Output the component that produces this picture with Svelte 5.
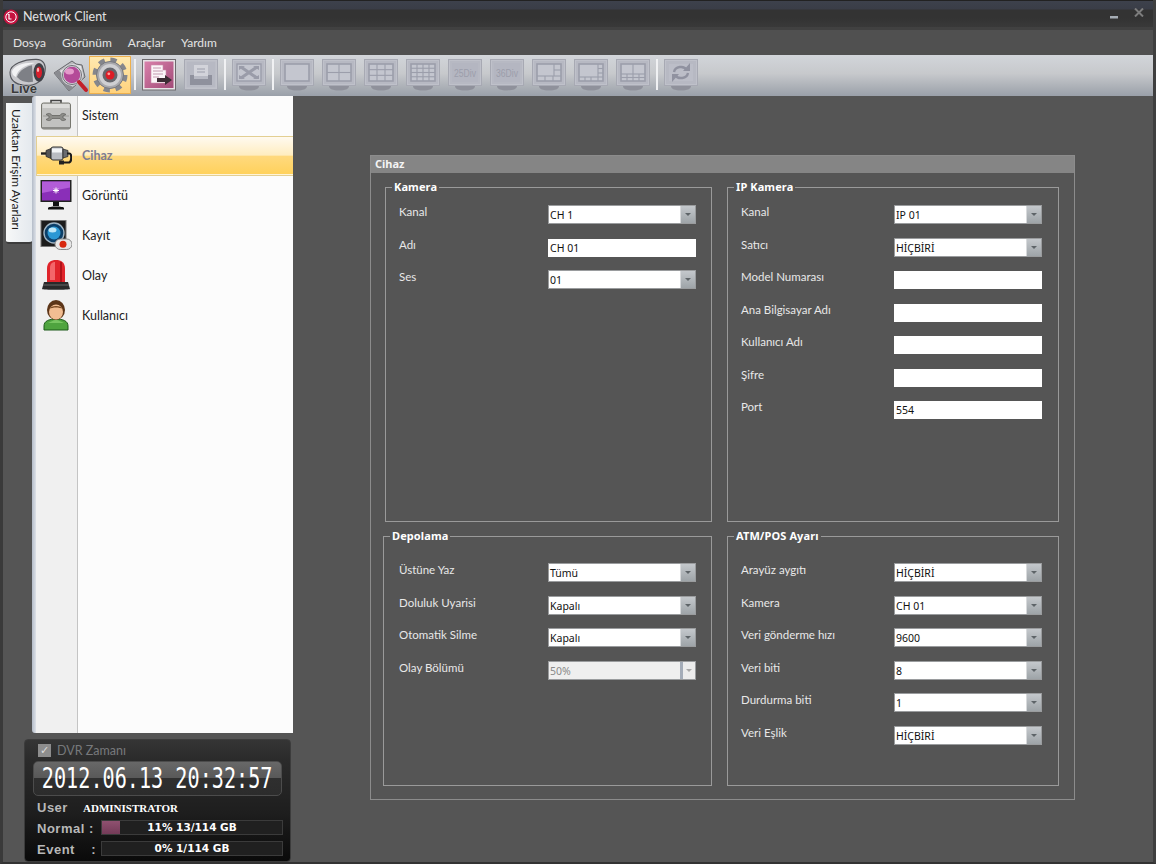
<script>
  const menus = ['Dosya', 'Görünüm', 'Araçlar', 'Yardım'];
  const X0 = 5, X1 = 29, Y0 = 5, Y1 = 22;
  const W = X1 - X0, H = Y1 - Y0;
  function grid(nx, ny) {
    const out = [];
    for (let i = 1; i < nx; i++) out.push([X0 + (W * i) / nx, Y0, X0 + (W * i) / nx, Y1]);
    for (let j = 1; j < ny; j++) out.push([X0, Y0 + (H * j) / ny, X1, Y0 + (H * j) / ny]);
    return out;
  }
  const monitors = [
    { lines: [] },
    { lines: grid(2, 2) },
    { lines: grid(3, 3) },
    { lines: grid(4, 4) },
    { text: '25Div', lines: [] },
    { text: '36Div', lines: [] },
    { lines: [[22, 5, 22, 17], [5, 17, 29, 17], [22, 11, 29, 11], [13, 17, 13, 22], [21, 17, 21, 22]] },
    { lines: [[24, 5, 24, 22], [5, 18, 29, 18], [24, 9.5, 29, 9.5], [24, 14, 29, 14], [11, 18, 11, 22], [17, 18, 17, 22]] },
    { lines: [[17, 5, 17, 15], [5, 15, 29, 15], [5, 18.5, 29, 18.5], [11, 15, 11, 22], [17, 15, 17, 22], [23, 15, 23, 22]] }
  ];
  const nav = [
    { id: 'tool', label: 'Sistem' },
    { id: 'plug', label: 'Cihaz', active: true },
    { id: 'screen', label: 'Görüntü' },
    { id: 'cam', label: 'Kayıt' },
    { id: 'siren', label: 'Olay' },
    { id: 'user', label: 'Kullanıcı' }
  ];
  const kamera = [
    { label: 'Kanal', type: 's', value: 'CH 1' },
    { label: 'Adı', type: 'i', value: 'CH 01' },
    { label: 'Ses', type: 's', value: '01' }
  ];
  const ip = [
    { label: 'Kanal', type: 's', value: 'IP 01' },
    { label: 'Satıcı', type: 's', value: 'HİÇBİRİ' },
    { label: 'Model Numarası', type: 'i', value: '' },
    { label: 'Ana Bilgisayar Adı', type: 'i', value: '' },
    { label: 'Kullanıcı Adı', type: 'i', value: '' },
    { label: 'Şifre', type: 'i', value: '' },
    { label: 'Port', type: 'i', value: '554' }
  ];
  const depo = [
    { label: 'Üstüne Yaz', type: 's', value: 'Tümü' },
    { label: 'Doluluk Uyarisi', type: 's', value: 'Kapalı' },
    { label: 'Otomatik Silme', type: 's', value: 'Kapalı' },
    { label: 'Olay Bölümü', type: 's', value: '50%', disabled: true }
  ];
  const atm = [
    { label: 'Arayüz aygıtı', type: 's', value: 'HİÇBİRİ' },
    { label: 'Kamera', type: 's', value: 'CH 01' },
    { label: 'Veri gönderme hızı', type: 's', value: '9600' },
    { label: 'Veri biti', type: 's', value: '8' },
    { label: 'Durdurma biti', type: 's', value: '1' },
    { label: 'Veri Eşlik', type: 's', value: 'HİÇBİRİ' }
  ];
  const groups = [
    { title: 'Kamera', rows: kamera, cls: 'g-left' },
    { title: 'IP Kamera', rows: ip, cls: 'g-right' },
    { title: 'Depolama', rows: depo, cls: 'g-left g-shift low' },
    { title: 'ATM/POS Ayarı', rows: atm, cls: 'g-right low' }
  ];
</script>

{#snippet frame()}
  <path d="M7 27h20c0 3-4 4.500-10 4.500S7 30 7 27z" fill="#8f919b" />
  <rect x="0.5" y="0.5" width="33" height="26" fill="#bfc1ca" stroke="#a7a9b3" />
  <rect x="2" y="2" width="30" height="23" fill="#b7b9c3" />
{/snippet}

{#snippet monitor(m)}
  <svg class="tbi" viewBox="0 0 34 32" aria-hidden="true">
    {@render frame()}
    {#if m.text}
      <rect x="4" y="4" width="26" height="19" fill="#b4b6c1" />
      <text x="6" y="18" class="divt" textLength="22" lengthAdjust="spacingAndGlyphs">{m.text}</text>
    {:else}
      <rect x="5" y="5" width="24" height="17" fill="#c4c6cf" stroke="#9c9eab" stroke-width="1.6" />
      {#each m.lines as l}
        <line x1={l[0]} y1={l[1]} x2={l[2]} y2={l[3]} stroke="#9c9eab" stroke-width="1.1" />
      {/each}
    {/if}
  </svg>
{/snippet}

{#snippet navIcon(id)}
  <svg class="ni" viewBox="0 0 32 32" aria-hidden="true">
    {#if id === 'tool'}
      <path d="M11 4V1.500h10V4" fill="none" stroke="#444" stroke-width="1.600" />
      <rect x="1.500" y="4" width="29" height="26" rx="2" fill="#c2c2c0" stroke="#77776f" />
      <rect x="2.500" y="5" width="27" height="4" fill="#dcdcda" />
      <path d="M3 17h26" stroke="#9a9a96" />
      <path d="M6 15.500c3-2 5-1 6 1h8c1-2 3-3 6-1l-3 1.500v2l3 1.500c-3 2-5 1-6-1h-8c-1 2-3 3-6 1l3-1.500v-2z" fill="#8d8d89" stroke="#5f5f5b" stroke-width=".7" />
      <rect x="2" y="28" width="28" height="2" fill="#8a8a86" />
    {:else if id === 'plug'}
      <path d="M1 14.500h6" stroke="#222" stroke-width="2.400" />
      <path d="M6 11.500l5-2v10l-5-2z" fill="#555" stroke="#222" stroke-width=".7" />
      <rect x="11" y="8" width="12" height="13" rx="2" fill="#b9bcc2" stroke="#333" />
      <rect x="12" y="9.500" width="10" height="4" fill="#f2f4f6" />
      <path d="M23 10l5 1.500v6L23 19z" fill="#6a6c70" stroke="#222" stroke-width=".7" />
      <path d="M27 14.500h2.500c2.500 0 2.500 9-1 9H22" fill="none" stroke="#1b1b1b" stroke-width="2.200" />
      <rect x="19" y="21.500" width="5" height="4" fill="#222" />
    {:else if id === 'screen'}
      <rect x="0.500" y="1" width="31" height="22" fill="#222" />
      <rect x="2" y="2.500" width="28" height="19" fill="#8a2fb8" />
      <path d="M2 2.500h28v6L2 14z" fill="#b25cd8" />
      <g stroke="#fff" stroke-width="1"><path d="M16 8.500v6M13 11.500h6M14 9.500l4 4M18 9.500l-4 4" /></g>
      <rect x="13" y="23" width="6" height="4" fill="#111" />
      <path d="M8 29c0-2 16-2 16 0v1.500H8z" fill="#111" />
    {:else if id === 'cam'}
      <rect x="1" y="1.500" width="25" height="26" fill="#1c1c1c" stroke="#777" />
      <circle cx="14" cy="14" r="10" fill="#0c3f68" stroke="#9fb4c4" stroke-width="1.400" />
      <circle cx="14" cy="14" r="6.500" fill="#2b98d4" />
      <ellipse cx="12.500" cy="11" rx="4" ry="2.500" fill="#bfe8f8" />
      <rect x="15" y="20" width="17" height="10.500" rx="5.250" fill="#e6e6e6" stroke="#888" />
      <circle cx="23" cy="25.200" r="3.500" fill="#d8280f" />
    {:else if id === 'siren'}
      <path d="M7 23V10C7 3 11 1 16 1s9 2 9 9v13z" fill="#e0242b" />
      <path d="M10 21V9c0-4 2-6 5-6v18z" fill="#f4666a" />
      <path d="M21 3v20" stroke="#b01218" stroke-width="2" />
      <path d="M4 23h24l2 7c0 1-28 1-28 0z" fill="#2a2a2a" />
      <path d="M3 26h26" stroke="#666" />
    {:else}
      <path d="M4 31v-4c0-5 5-7 12-7s12 2 12 7v4z" fill="#4fa43f" stroke="#1d5a1a" />
      <path d="M16 21c-3 0-5 2-8 3h16c-3-1-5-3-8-3z" fill="#78c561" />
      <ellipse cx="16" cy="11" rx="9" ry="10" fill="#5c3518" />
      <ellipse cx="16" cy="13" rx="7" ry="7.500" fill="#f2bd92" />
      <path d="M9 10c2-4 12-4 14 0-4-2-10-2-14 0z" fill="#7a4a22" />
    {/if}
  </svg>
{/snippet}

<div class="window">
  <header class="titlebar">
    <div class="titleinner">
      <svg class="logo" viewBox="0 0 16 16" aria-hidden="true">
        <circle cx="8" cy="8" r="7.500" fill="#c4123f" />
        <circle cx="8" cy="8" r="5.200" fill="none" stroke="#fff" stroke-width="1" />
        <path d="M6 5v5h2.500" fill="none" stroke="#fff" stroke-width="1.200" />
        <circle cx="5.200" cy="5.200" r=".7" fill="#fff" />
      </svg>
      <span class="wtitle">Network Client</span>
      <span class="wbtns">
        <svg width="8" height="3" viewBox="0 0 8 3" aria-hidden="true"><rect width="8" height="2.500" fill="#a6adb5" /></svg>
        <svg class="xbtn" width="10" height="9" viewBox="0 0 10 9" aria-hidden="true"><path d="M1 .5l8 8M9 .5l-8 8" stroke="#7d7d7d" stroke-width="2" /></svg>
      </span>
    </div>
  </header>
  <nav class="menubar">
    {#each menus as m}<span>{m}</span>{/each}
  </nav>
  <div class="toolbar">
    <svg class="big live" viewBox="0 0 40 38" aria-hidden="true">
      <g transform="scale(1 1.180)">
        <path d="M2 13C2 6 16 2 28 2c8 0 10 5 9 10-1 8-10 13-21 12C6 23 2 19 2 13z" fill="#c8c8cc" stroke="#55565c" stroke-width="1.100" />
        <path d="M4 12C6 7 18 4 27 5 18 7 9 10 8 17c-3-1-4-3-4-5z" fill="#f2f2f4" />
        <path d="M9 17c2-6 10-9 15-10l1 14c-6 1-12 0-16-4z" fill="#7e8086" />
        <ellipse cx="31" cy="13" rx="5.500" ry="8" fill="#3f4147" />
        <ellipse cx="31" cy="13" rx="3" ry="5" fill="#d81e2c" />
        <ellipse cx="30" cy="11" rx="1.200" ry="1.800" fill="#ffb0b0" />
      </g>
      <text x="3" y="36" class="livet">Live</text>
    </svg>
    <svg class="big folder" viewBox="0 0 38 36" aria-hidden="true">
      <path d="M2 15L20 3l4 3 6 1 3 12-16 14z" fill="#b9b9bc" stroke="#66676c" />
      <path d="M4 15L21 6l8 2 2 10-14 12z" fill="#e6e6e8" />
      <path d="M2 15l15 18 4-3L7 12z" fill="#8a8b90" />
      <circle cx="20" cy="17" r="9.500" fill="#b44a98" stroke="#d6d6da" stroke-width="2.500" />
      <circle cx="20" cy="17" r="9.500" fill="none" stroke="#55565c" stroke-width=".8" />
      <ellipse cx="17.500" cy="13.500" rx="4.500" ry="3" fill="#e49acb" />
      <path d="M27 24l7 8" stroke="#c31f28" stroke-width="4" stroke-linecap="round" />
    </svg>
    <button class="gearbtn" aria-label="Ayarlar">
      <svg viewBox="0 0 38 36" aria-hidden="true">
        <circle cx="19" cy="18" r="14.500" fill="none" stroke="#85868c" stroke-width="6" stroke-dasharray="5.900 5.480" />
        <circle cx="19" cy="18" r="13.500" fill="#a8a8ac" stroke="#75767c" />
        <circle cx="19" cy="18" r="11" fill="#cfcfd2" />
        <circle cx="19" cy="18" r="7.500" fill="#66676d" />
        <circle cx="19" cy="18" r="4.500" fill="#dd1c26" />
        <circle cx="17.800" cy="16.800" r="1.400" fill="#ffa0a0" />
      </svg>
    </button>
    <i class="sep"></i>
    <svg class="tbi" viewBox="0 0 34 32" aria-hidden="true">
      <defs>
        <linearGradient id="pk" x1="0" y1="0" x2="1" y2="1"><stop offset="0" stop-color="#d980ab" /><stop offset="1" stop-color="#a24b78" /></linearGradient>
      </defs>
      <rect x="0.500" y="0.500" width="33" height="30.500" fill="#e7e3e6" stroke="#6d6a6e" />
      <rect x="2.500" y="2.500" width="29" height="26.500" fill="url(#pk)" />
      <path d="M9 6h12v5h3v13H9z" fill="#fbf5f8" stroke="#c98aa9" stroke-width=".6" />
      <path d="M11 9h8M11 12h10M11 15h10M11 18h6" stroke="#c39ab0" />
      <path d="M15 19h8v-3l7 5-7 5v-3h-8z" fill="#3c2c34" />
    </svg>
    <svg class="tbi" viewBox="0 0 34 32" aria-hidden="true">
      <rect x="0.500" y="0.500" width="33" height="30" fill="#c0c2ca" stroke="#a7a9b3" />
      <rect x="2.500" y="2.500" width="29" height="26" fill="#b7b9c3" />
      <path d="M10 6h14v11H10z" fill="#d2d3da" />
      <path d="M13 10h8M13 13h8" stroke="#9c9eab" />
      <path d="M6 16h4v4h14v-4h4v10H6z" fill="#8f919d" />
    </svg>
    <i class="sep"></i>
    <svg class="tbi" viewBox="0 0 34 32" aria-hidden="true">
      {@render frame()}
      <rect x="5" y="5" width="24" height="17" fill="#c4c6cf" stroke="#9c9eab" stroke-width="1.400" />
      <path d="M9 8l16 11M25 8L9 19" stroke="#9a9ca9" stroke-width="3" />
      <path d="M7 7h6l-6 4zM27 7h-6l6 4zM7 20h6l-6-4zM27 20h-6l6-4z" fill="#9a9ca9" />
    </svg>
    <i class="sep"></i>
    {#each monitors as m}
      {@render monitor(m)}
    {/each}
    <i class="sep"></i>
    <svg class="tbi" viewBox="0 0 34 32" aria-hidden="true">
      {@render frame()}
      <rect x="5" y="5" width="24" height="17" fill="#bcbec8" />
      <path d="M10 13a7 6 0 0 1 13-2" fill="none" stroke="#9092a0" stroke-width="2.400" />
      <path d="M25 5v8h-7z" fill="#9092a0" transform="translate(1 -1)" />
      <path d="M24 14a7 6 0 0 1-13 2" fill="none" stroke="#9092a0" stroke-width="2.400" />
      <path d="M9 22v-8h7z" fill="#9092a0" transform="translate(-1 1)" />
    </svg>
  </div>

  <main class="body">
    <aside class="side">
      <div class="sidetop">
        <div class="tabwrap"><div class="tab">Uzaktan Erişim Ayarları</div></div>
        <div class="rail"></div>
        <ul class="nav">
          {#each nav as n}
            <li class:active={n.active}>
              <span class="ico">{@render navIcon(n.id)}</span>
              <span class="nl">{n.label}</span>
            </li>
          {/each}
        </ul>
      </div>
      <section class="status">
        <div class="dvr"><span class="check">✓</span><span>DVR Zamanı</span></div>
        <div class="clock"><span>2012.06.13 20:32:57</span></div>
        <div class="st-row userrow"><b class="k">User</b><b class="admin">ADMINISTRATOR</b></div>
        <div class="st-row"><b class="k kn">Normal :</b><div class="bar"><i class="fill"></i><span>11% 13/114 GB</span></div></div>
        <div class="st-row"><b class="k kn ke"><span>Event</span><span>:</span></b><div class="bar"><span>0% 1/114 GB</span></div></div>
      </section>
    </aside>
    <div class="content">
      <section class="panel">
        <h2>Cihaz</h2>
        <div class="groups">
          {#each groups as g}
            <fieldset class={g.cls}>
              <legend>{g.title}</legend>
              <div class="rows">
                {#each g.rows as r}
                  <div class="row">
                    <span class="lbl">{r.label}</span>
                    {#if r.type === 's'}
                      <div class="sel" class:dis={r.disabled}>
                        <span class="val">{r.value}</span>
                        <span class="arrow"><i></i></span>
                      </div>
                    {:else}
                      <input class="inp" type="text" value={r.value} readonly />
                    {/if}
                  </div>
                {/each}
              </div>
            </fieldset>
          {/each}
        </div>
      </section>
    </div>
  </main>
</div>

<style>
  :global(body) { margin: 0; background: #555; }
  .window {
    width: 1156px; height: 864px; overflow: hidden; display: flex; flex-direction: column;
    background: #555; font-family: "Noto Sans", "Liberation Sans", sans-serif; font-size: 11px;
    box-sizing: border-box; border-left: 3px solid #3a3a3a; border-right: 3px solid #3f3f3f; border-bottom: 2px solid #333;
  }
  .titlebar {
    margin: 0 -3px; height: 30px; box-sizing: border-box; flex: none;
    background: linear-gradient(#222 0, #222 1px, #3d414c 1px, #3a3d47 9px, #333 10px, #333 18px, #393939 27px, #414141 27px, #414141 30px);
  }
  .titleinner { display: flex; align-items: center; height: 27px; padding: 7px 12px 0 3px; box-sizing: border-box; }
  .logo { width: 16px; height: 16px; }
  .wtitle { margin-left: 4px; color: #e2e2e2; font-family: Lato, "Noto Sans", sans-serif; font-size: 12.500px; line-height: 16px; }
  .wbtns { margin-left: auto; display: flex; align-items: center; gap: 16px; }
  .xbtn { margin-top: -9px; }
  .menubar {
    flex: none; height: 25px; background: #505050; display: flex; gap: 16px; padding: 0 0 0 10px; align-items: center;
    color: #e4e4e4; font-family: Lato, "Noto Sans", sans-serif; font-size: 12px;
  }
  .toolbar {
    flex: none; height: 41px; box-sizing: border-box; display: flex; align-items: flex-start; gap: 8px;
    background: linear-gradient(#d2d5da 0, #c7c9cc 45%, #9aa0a9 100%); padding: 4px 0 0 5px;
  }
  .big { flex: none; display: block; }
  .live { width: 40px; height: 38px; margin-top: -2px; }
  .folder { width: 38px; height: 36px; margin: -1px -8px 0 -4px; }
  .gearbtn {
    flex: none; width: 42px; height: 38px; padding: 0; margin: -3px -3px 0 -1px; box-sizing: border-box;
    border: 1px solid #eeb04c; background: linear-gradient(#ffe9b0, #ffd27d); display: flex; align-items: center; justify-content: center;
  }
  .gearbtn svg { width: 38px; height: 36px; }
  .tbi { flex: none; width: 34px; height: 32px; display: block; }
  .sep { flex: none; width: 2px; height: 31px; margin: 0 -2px; background: #f0f1f3; }
  .divt { font-family: "Liberation Sans", sans-serif; font-size: 11.500px; fill: #9c9eab; }
  .livet { font-family: "Liberation Sans", sans-serif; font-weight: 700; font-size: 13px; fill: #3a3a3a; stroke: #e8e8e8; stroke-width: .3px; paint-order: stroke; }

  .body { flex: 1; display: flex; min-height: 0; }
  .side { flex: none; width: 290px; display: flex; flex-direction: column; }
  .sidetop { height: 637px; display: flex; flex: none; }
  .tabwrap { flex: none; width: 29px; padding: 7px 0 0 3px; box-sizing: border-box; }
  .tab {
    writing-mode: vertical-rl; width: 26px; height: 141px; box-sizing: border-box; padding: 6px 6px 0 0; text-align: left; line-height: 20px;
    background: linear-gradient(90deg, #f7f8f8, #e4e9ee); color: #1c1c1c; font-family: Lato, "Noto Sans", sans-serif; font-size: 12px; border-bottom: 2px solid #3c3c3c; border-radius: 0 0 3px 3px; white-space: nowrap;
  }
  .rail { flex: none; width: 4px; background: linear-gradient(90deg, #b4bcc8, #dde1e8); border-radius: 3px 0 0 3px; }
  .nav {
    list-style: none; margin: 0; padding: 0; flex: 1; background: linear-gradient(90deg, #f0f0f0 0, #f0f0f0 41px, #c4c4c4 41px, #c4c4c4 42px, #fcfcfc 42px);
  }
  .nav li { height: 40px; display: flex; align-items: center; box-sizing: border-box; color: #222; font-family: Lato, "Noto Sans", sans-serif; font-size: 12.500px; }
  .nav li.active {
    border: 1px solid #e3cf92; border-right: 0;
    background: linear-gradient(#fffaf0 0, #ffedc0 48%, #ffd97e 50%, #ffd15a 100%); color: #7d7d92; font-weight: 700; box-shadow: inset 0 -1px 0 #fff4d8;
  }
  .ico { width: 46px; height: 34px; padding-left: 4px; box-sizing: border-box; display: block; flex: none; }
  .ni { width: 32px; height: 32px; display: block; }
  .nl { line-height: 16px; margin-top: -1px; }
  .active .ico { margin-left: -1px; }

  .status {
    margin: 6px 0 0 21px; width: 267px; height: 123px; box-sizing: border-box; border-radius: 4px; padding: 3px 8px 0 9px;
    background: linear-gradient(#353535 0, #2b2b2b 20px, #1e1e1e 60%, #0a0a0a 100%); border: 1px solid #3c3c3c;
  }
  .dvr { display: flex; align-items: center; gap: 6px; height: 14px; margin-left: 4px; color: #77797c; font-family: Lato, "Noto Sans", sans-serif; font-size: 12.500px; }
  .check { width: 13px; height: 13px; line-height: 13px; text-align: center; background: #8d8d8d; color: #dcdcdc; font-size: 11px; font-family: "DejaVu Sans", sans-serif; display: block; }
  .clock {
    margin: 4px 0 0 -1px; width: 249px; height: 35px; box-sizing: border-box; border-radius: 5px; overflow: hidden; display: flex; align-items: center; justify-content: center;
    background: linear-gradient(#686868 0, #585858 50%, #2f2f2f 50%, #2c2c2c 100%); border: 1px solid #4c4c4c;
    color: #fff; font-family: "DejaVu Sans Mono", monospace; font-size: 28px; white-space: nowrap;
  }
  .clock span { display: block; transform: scaleX(0.72); flex: none; }
  .st-row { display: flex; align-items: center; height: 21px; padding-left: 4px; }
  .userrow { height: 20px; }
  .k { color: #b8b8b8; font-size: 13px; font-family: "Liberation Sans", sans-serif; width: 46px; flex: none; margin: 3px 0 0 -1px; white-space: nowrap; letter-spacing: .5px; }
  .kn { width: 64px; }
  .ke { display: flex; justify-content: space-between; padding-right: 5px; box-sizing: border-box; }
  .admin { color: #fff; font-family: "Liberation Serif", serif; font-size: 11px; margin-top: 3px; }
  .bar {
    position: relative; flex: none; width: 182px; height: 15px; margin-top: 1px; box-sizing: border-box; background: #202020; border: 1px solid #3b3b3b;
    display: flex; align-items: center; justify-content: center; color: #fff; font-family: "DejaVu Sans", sans-serif; font-weight: 700; font-size: 10.500px;
  }
  .bar span { position: relative; }
  .fill { position: absolute; left: 0; top: 0; bottom: 0; width: 18px; background: linear-gradient(#8f5170, #743b58); }

  .content { flex: 1; padding: 59px 0 0 77px; min-width: 0; }
  .panel { width: 705px; height: 645px; box-sizing: border-box; border: 1px solid #8c8c8c; }
  h2 { margin: 0; height: 17px; padding-left: 4px; background: #858585; color: #f4f4f4; font-size: 11px; line-height: 16px; font-weight: 700; }
  .groups { display: grid; grid-template-columns: 327px 332px; grid-template-rows: 342px 257px; gap: 7px 15px; padding: 7px 0 0 14px; }
  fieldset { margin: 0; padding: 0; min-width: 0; border: 1px solid #9a9a9a; box-sizing: border-box; }
  legend { margin-left: 6px; padding: 0 2px; line-height: 14px; height: 14px; color: #fff; font-weight: 700; font-size: 11px; letter-spacing: .1px; }
  .g-shift { margin-left: -2px; }
  .rows { display: grid; grid-auto-rows: 32.5px; padding: 11px 0 0 13px; }
  .g-shift .rows { padding-left: 15px; }
  .low .rows { padding-top: 20px; }
  .row { display: flex; align-items: flex-start; }
  .lbl { color: #e8e8e8; font-family: Lato, "Noto Sans", sans-serif; font-size: 11.500px; line-height: 14px; width: 149px; flex: none; white-space: nowrap; }
  .g-right .lbl { width: 153px; }
  .sel { width: 148px; height: 19px; box-sizing: border-box; border: 1px solid #9a9c9e; display: flex; background: #fff; }
  .val { flex: 1; padding: 1px 0 0 1px; color: #111; font-size: 10.500px; line-height: 16px; }
  .arrow { width: 14px; background: linear-gradient(#c4c8cc, #9ea4a8); display: flex; align-items: center; justify-content: center; border-left: 1px solid #d8dadc; }
  .arrow i { width: 0; height: 0; border: 3px solid transparent; border-top: 3px solid #5e6468; border-bottom: 0; }
  .dis { background: #efefef; }
  .dis .val { color: #8a8a8a; }
  .dis .arrow { background: #ececec; border-left: 3px solid #a4acb8; width: 12px; }
  .dis .arrow i { border-top-color: #a8a8a8; }
  .inp { display: block; width: 148px; height: 18px; box-sizing: border-box; border: 0; padding: 0 2px; margin: 1px 0 0; background: #fff; color: #111; font: 10.500px "Noto Sans", "Liberation Sans", sans-serif; outline: 0; }
</style>
